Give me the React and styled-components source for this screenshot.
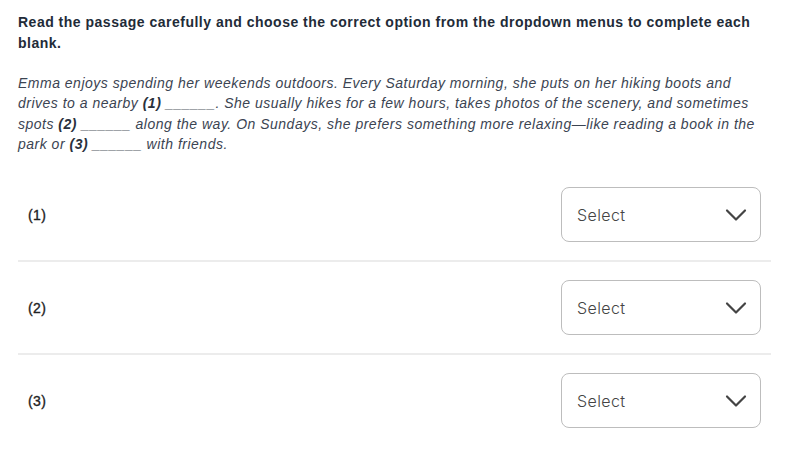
import React from 'react'
import styled, { createGlobalStyle } from 'styled-components'

const GlobalStyle = createGlobalStyle`
    body {
        margin: 0;
        background: #fff;
        font-family: "Liberation Sans", Arial, sans-serif;
    }
`

const blanks = [1, 2, 3]

function Chevron() {
    return (
        <svg width="22" height="14" viewBox="0 0 22 14" fill="none">
            <path d="M2 2.5 L11 11.5 L20 2.5" stroke="#444" strokeWidth="2.2" strokeLinecap="round" strokeLinejoin="round" />
        </svg>
    )
}

function Blank({ n }) {
    return <BlankText><b>({n})</b> ______</BlankText>
}

function App() {
    return (
        <Container>
            <GlobalStyle />
            <Instructions>
                Read the passage carefully and choose the correct option from the dropdown menus to complete each blank.
            </Instructions>
            <Passage>
                Emma enjoys spending her weekends outdoors. Every Saturday morning, she puts on her hiking boots and<br />
                drives to a nearby <Blank n={1} />. She usually hikes for a few hours, takes photos of the scenery, and sometimes<br />
                spots <Blank n={2} /> along the way. On Sundays, she prefers something more relaxing—like reading a book in the<br />
                park or <Blank n={3} /> with friends.
            </Passage>
            <List>
                {blanks.map((n) => (
                    <Row key={n}>
                        <Label>({n})</Label>
                        <SelectBox>
                            <span>Select</span>
                            <Chevron />
                        </SelectBox>
                    </Row>
                ))}
            </List>
        </Container>
    )
}

const Container = styled.div`
    padding: 12px 19px 0 18px;
`

const Instructions = styled.p`
    margin: 0;
    font-size: 14px;
    line-height: 21px;
    font-weight: 700;
    letter-spacing: 0.5px;
    color: #222b38;
`

const Passage = styled.p`
    margin: 19px 0 0;
    font-size: 14px;
    line-height: 20.3px;
    font-style: italic;
    letter-spacing: 0.5px;
    white-space: nowrap;
    color: #3b4452;
`

const BlankText = styled.span`
    white-space: nowrap;
    color: #555c66;
    b {
        font-weight: 700;
        color: #2a313c;
    }
`

const List = styled.div`
    margin-top: 15px;
`

const Row = styled.div`
    display: flex;
    align-items: center;
    justify-content: space-between;
    padding: 18px 10px 18px 10px;
    border-bottom: 2px solid #ececec;
    &:last-child {
        border-bottom: none;
    }
`

const Label = styled.div`
    font-size: 14px;
    font-weight: 400;
    -webkit-text-stroke: 0.35px #222;
    color: #222;
    letter-spacing: 0.4px;
`

const SelectBox = styled.div`
    width: 200px;
    height: 55px;
    box-sizing: border-box;
    border: 1px solid #bdbdbd;
    border-radius: 8px;
    display: flex;
    align-items: center;
    justify-content: space-between;
    padding: 0 13px 0 15px;
    span {
        font-family: Inter, "Open Sans", sans-serif;
        font-size: 16px;
        font-weight: 300;
        color: #444;
        letter-spacing: 0.4px;
    }
`

export default App
